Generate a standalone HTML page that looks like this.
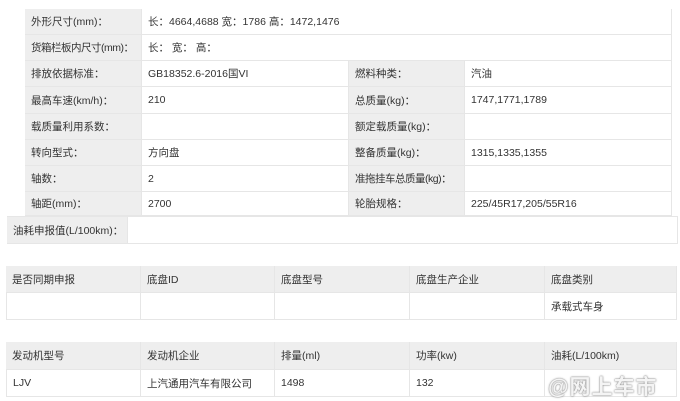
<!DOCTYPE html><html><head><meta charset="utf-8"><style>
body{margin:0;width:680px;height:400px;background:#fff;position:relative;overflow:hidden;font-family:"Liberation Sans","Noto Sans CJK SC",sans-serif;font-size:10.5px;color:#333}
.c{position:absolute;box-sizing:border-box;padding-left:6px;display:flex;align-items:center;border-right:1px solid #e6e6e6;border-bottom:1px solid #e6e6e6;white-space:nowrap;overflow:visible}
.g{background:#eeeeee}
.n{letter-spacing:-0.5px}
</style></head><body>
<div class="c g" style="left:25px;top:9px;width:117px;height:26px">外形尺寸(mm)：</div>
<div class="c" style="left:142px;top:9px;width:530px;height:26px">长：4664,4688 宽：1786 高：1472,1476</div>
<div class="c g n" style="left:25px;top:35px;width:117px;height:26px">货箱栏板内尺寸(mm)：</div>
<div class="c" style="left:142px;top:35px;width:530px;height:26px">长： 宽： 高：</div>
<div class="c g" style="left:25px;top:61px;width:117px;height:26px">排放依据标准：</div>
<div class="c" style="left:142px;top:61px;width:207px;height:26px">GB18352.6-2016国VI</div>
<div class="c g" style="left:349px;top:61px;width:116px;height:26px">燃料种类：</div>
<div class="c" style="left:465px;top:61px;width:207px;height:26px">汽油</div>
<div class="c g" style="left:25px;top:87px;width:117px;height:27px">最高车速(km/h)：</div>
<div class="c" style="left:142px;top:87px;width:207px;height:27px">210</div>
<div class="c g" style="left:349px;top:87px;width:116px;height:27px">总质量(kg)：</div>
<div class="c" style="left:465px;top:87px;width:207px;height:27px">1747,1771,1789</div>
<div class="c g" style="left:25px;top:114px;width:117px;height:26px">载质量利用系数：</div>
<div class="c" style="left:142px;top:114px;width:207px;height:26px"></div>
<div class="c g" style="left:349px;top:114px;width:116px;height:26px">额定载质量(kg)：</div>
<div class="c" style="left:465px;top:114px;width:207px;height:26px"></div>
<div class="c g" style="left:25px;top:140px;width:117px;height:26px">转向型式：</div>
<div class="c" style="left:142px;top:140px;width:207px;height:26px">方向盘</div>
<div class="c g" style="left:349px;top:140px;width:116px;height:26px">整备质量(kg)：</div>
<div class="c" style="left:465px;top:140px;width:207px;height:26px">1315,1335,1355</div>
<div class="c g" style="left:25px;top:166px;width:117px;height:26px">轴数：</div>
<div class="c" style="left:142px;top:166px;width:207px;height:26px">2</div>
<div class="c g n" style="left:349px;top:166px;width:116px;height:26px">准拖挂车总质量(kg)：</div>
<div class="c" style="left:465px;top:166px;width:207px;height:26px"></div>
<div class="c g" style="left:25px;top:192px;width:117px;height:24px">轴距(mm)：</div>
<div class="c" style="left:142px;top:192px;width:207px;height:24px">2700</div>
<div class="c g" style="left:349px;top:192px;width:116px;height:24px">轮胎规格：</div>
<div class="c" style="left:465px;top:192px;width:207px;height:24px">225/45R17,205/55R16</div>
<div class="c g" style="left:7px;top:216px;width:121px;height:28px;border-top:1px solid #e6e6e6">油耗申报值(L/100km)：</div>
<div class="c" style="left:128px;top:216px;width:550px;height:28px;border-top:1px solid #e6e6e6"></div>

<div class="c g" style="left:6px;top:266px;width:135px;height:27px">是否同期申报</div>
<div class="c g" style="left:141px;top:266px;width:134px;height:27px">底盘ID</div>
<div class="c g" style="left:275px;top:266px;width:135px;height:27px">底盘型号</div>
<div class="c g" style="left:410px;top:266px;width:135px;height:27px">底盘生产企业</div>
<div class="c g" style="left:545px;top:266px;width:132px;height:27px">底盘类别</div>
<div class="c" style="left:6px;top:293px;width:135px;height:27px;border-left:1px solid #e6e6e6"></div>
<div class="c" style="left:141px;top:293px;width:134px;height:27px"></div>
<div class="c" style="left:275px;top:293px;width:135px;height:27px"></div>
<div class="c" style="left:410px;top:293px;width:135px;height:27px"></div>
<div class="c" style="left:545px;top:293px;width:132px;height:27px">承载式车身</div>

<div class="c g" style="left:6px;top:342px;width:135px;height:28px">发动机型号</div>
<div class="c g" style="left:141px;top:342px;width:134px;height:28px">发动机企业</div>
<div class="c g" style="left:275px;top:342px;width:135px;height:28px">排量(ml)</div>
<div class="c g" style="left:410px;top:342px;width:135px;height:28px">功率(kw)</div>
<div class="c g" style="left:545px;top:342px;width:132px;height:28px">油耗(L/100km)</div>
<div class="c" style="left:6px;top:370px;width:135px;height:27px;border-left:1px solid #e6e6e6">LJV</div>
<div class="c" style="left:141px;top:370px;width:134px;height:27px">上汽通用汽车有限公司</div>
<div class="c" style="left:275px;top:370px;width:135px;height:27px">1498</div>
<div class="c" style="left:410px;top:370px;width:135px;height:27px">132</div>
<div class="c" style="left:545px;top:370px;width:132px;height:27px"></div>
<div style="position:absolute;left:548px;top:371px;font-size:21px;font-weight:bold;color:#f4f4f4;text-shadow:0 0 1px #777,0 0 2px #999;letter-spacing:1px">@网上车市</div>
</body></html>
